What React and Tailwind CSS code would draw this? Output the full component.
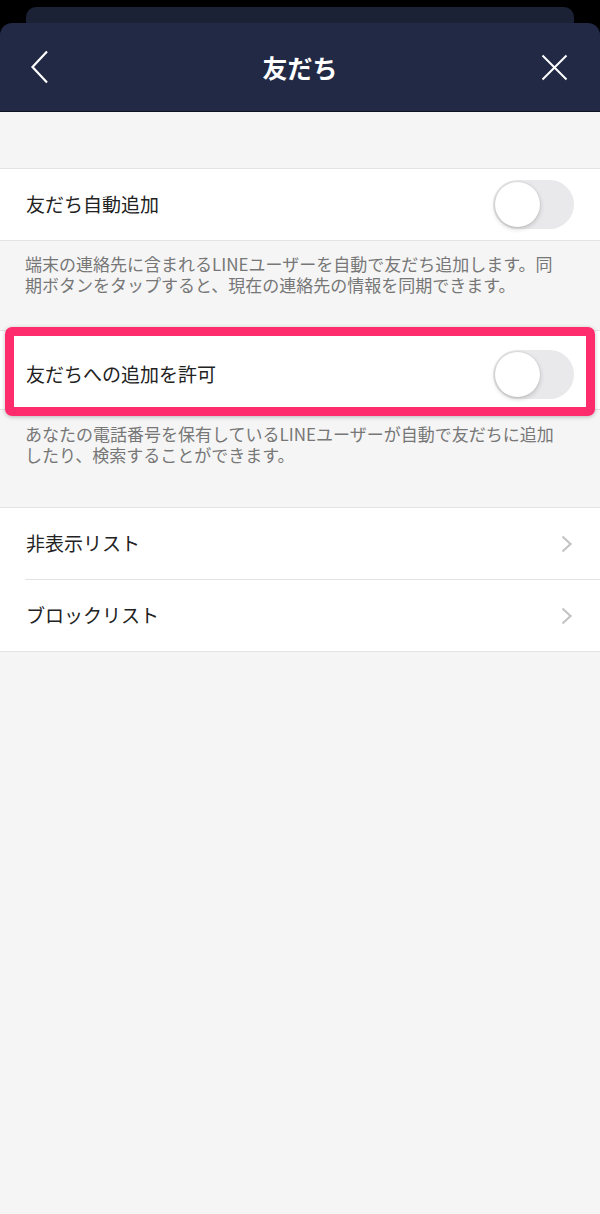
import React, { useState } from "react";

const font = { fontFamily: '"Noto Sans CJK JP", "Noto Sans", sans-serif' };

const Toggle = ({ on, onChange }) => (
  <button
    onClick={() => onChange(!on)}
    className={`relative w-[81px] h-[49px] rounded-full shrink-0 transition-colors ${
      on ? "bg-[#06c755]" : "bg-[#e9e9eb]"
    }`}
  >
    <span
      className={`absolute top-[2px] w-[45px] h-[45px] rounded-full bg-white shadow-[0_2px_5px_rgba(0,0,0,0.18),0_0_0_1px_rgba(0,0,0,0.04)] transition-all ${
        on ? "left-[34px]" : "left-[2px]"
      }`}
    />
  </button>
);

const Chevron = () => (
  <svg width="12" height="18" viewBox="0 0 12 18" fill="none" className="shrink-0">
    <path d="M1.5 1.5 L9.5 9 L1.5 16.5" stroke="#c4c4c6" strokeWidth="2.2" />
  </svg>
);

export default function App() {
  const [autoAdd, setAutoAdd] = useState(false);
  const [allowAdd, setAllowAdd] = useState(false);

  return (
    <div className="w-full min-h-[1214px] bg-black flex flex-col" style={font}>
      {/* stacked sheet behind */}
      <div className="pt-[7px] px-[26px]">
        <div className="h-[16px] rounded-t-[10px] bg-[#1c2236]" />
      </div>

      {/* header */}
      <div className="h-[89px] rounded-t-[12px] bg-[#222945] border-b border-[#0d1120] grid grid-cols-[80px_1fr_80px] items-center">
        <div className="pl-[30px]">
          <svg width="20" height="34" viewBox="0 0 20 34" fill="none">
            <path d="M17 1.5 L2.5 17 L17 32.5" stroke="white" strokeWidth="2.2" />
          </svg>
        </div>
        <div className="text-white text-[25px] font-bold leading-none text-center">友だち</div>
        <div className="flex justify-end pr-[32px]">
          <svg width="27" height="27" viewBox="0 0 27 27" fill="none">
            <path d="M1.5 1.5 L25.5 25.5 M25.5 1.5 L1.5 25.5" stroke="white" strokeWidth="2" />
          </svg>
        </div>
      </div>

      {/* content */}
      <div className="flex-1 bg-[#f5f5f5] flex flex-col">
        <div className="h-[56px]" />

        <div className="bg-white border-y border-[#e3e3e3] h-[73px] flex items-center justify-between pl-[26px] pr-[26px]">
          <span className="text-[19px] text-[#222]">友だち自動追加</span>
          <Toggle on={autoAdd} onChange={setAutoAdd} />
        </div>
        <div className="h-[89px] pt-[12px] pl-[25px] pr-[10px] text-[17px] leading-[21px] text-[#777] whitespace-nowrap">
          端末の連絡先に含まれるLINEユーザーを自動で友だち追加します。同
          <br />
          期ボタンをタップすると、現在の連絡先の情報を同期できます。
        </div>

        <div className="relative">
          <div className="bg-white border-y border-[#e3e3e3] h-[80px] pt-[8px] flex items-center justify-between pl-[26px] pr-[26px]">
            <span className="text-[19px] text-[#222]">友だちへの追加を許可</span>
            <Toggle on={allowAdd} onChange={setAllowAdd} />
          </div>
          {/* highlight */}
          <div className="absolute -top-[3px] left-[5px] right-[5px] -bottom-[6px] border-[9px] border-[#fe2c6c] rounded-[7px] shadow-[0_1px_4px_rgba(0,0,0,0.25)] pointer-events-none" />
        </div>
        <div className="h-[97px] pt-[13px] pl-[25px] pr-[10px] text-[17px] leading-[21px] text-[#777] whitespace-nowrap">
          あなたの電話番号を保有しているLINEユーザーが自動で友だちに追加
          <br />
          したり、検索することができます。
        </div>

        <div className="bg-white border-y border-[#e3e3e3] flex flex-col">
          <div className="h-[71px] flex items-center justify-between pl-[26px] pr-[27px]">
            <span className="text-[19px] text-[#222]">非表示リスト</span>
            <Chevron />
          </div>
          <div className="ml-[25px] h-px bg-[#e3e3e3]" />
          <div className="h-[71px] flex items-center justify-between pl-[26px] pr-[27px]">
            <span className="text-[19px] text-[#222]">ブロックリスト</span>
            <Chevron />
          </div>
        </div>
      </div>
    </div>
  );
}
